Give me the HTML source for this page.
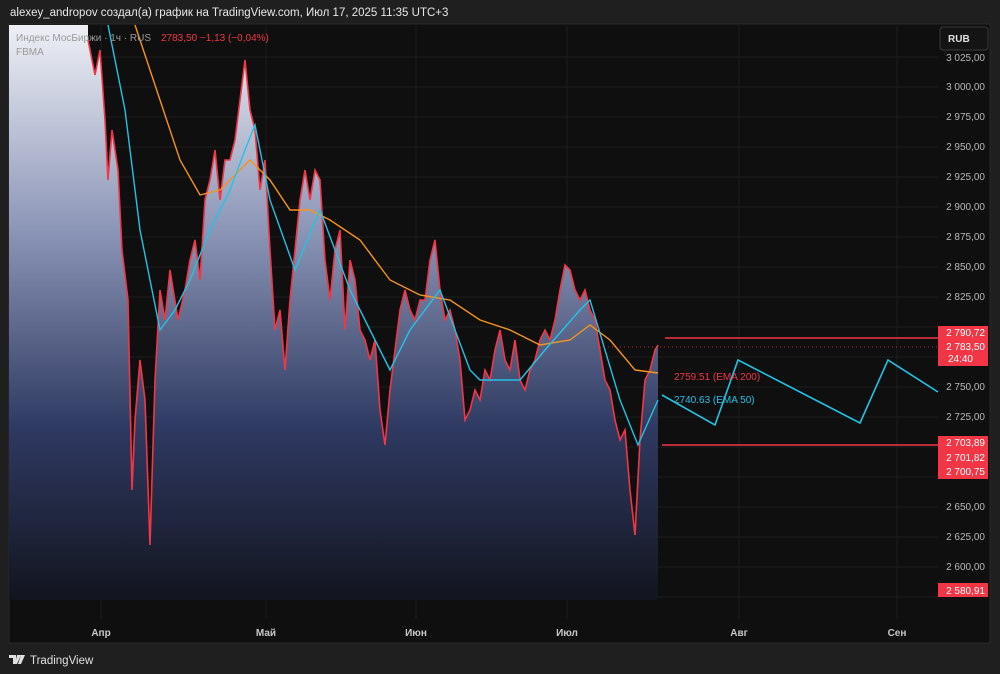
<!DOCTYPE html>
<html><head><meta charset="utf-8"><style>
body{margin:0;width:1000px;height:674px;background:#1f1f1f;overflow:hidden;font-family:"Liberation Sans","Noto Sans CJK SC",sans-serif}
svg{position:absolute;left:0;top:0}
</style></head><body>
<svg width="1000" height="674" xmlns="http://www.w3.org/2000/svg" font-family="Liberation Sans, sans-serif">
<defs>
<linearGradient id="g" x1="0" y1="0" x2="0" y2="1">
<stop offset="0" stop-color="#eef0f6"/><stop offset="0.35" stop-color="#8d97b8"/><stop offset="0.7" stop-color="#2f3a62"/><stop offset="1" stop-color="#12151f"/>
</linearGradient>
</defs>
<rect x="0" y="0" width="1000" height="674" fill="#1f1f1f"/>
<text x="10" y="16" fill="#e8e8e8" font-size="11.5">alexey_andropov создал(а) график на TradingView.com, Июл 17, 2025 11:35 UTC+3</text>
<rect x="9" y="24" width="981" height="619" fill="#0f0f0f" stroke="#2a2a2a"/>
<g stroke="#1c1c1c" stroke-width="1">
<line x1="9" x2="938" y1="57" y2="57"/><line x1="9" x2="938" y1="87" y2="87"/><line x1="9" x2="938" y1="117" y2="117"/><line x1="9" x2="938" y1="147" y2="147"/><line x1="9" x2="938" y1="177" y2="177"/><line x1="9" x2="938" y1="207" y2="207"/><line x1="9" x2="938" y1="237" y2="237"/><line x1="9" x2="938" y1="267" y2="267"/><line x1="9" x2="938" y1="297" y2="297"/><line x1="9" x2="938" y1="327" y2="327"/><line x1="9" x2="938" y1="357" y2="357"/><line x1="9" x2="938" y1="387" y2="387"/><line x1="9" x2="938" y1="417" y2="417"/><line x1="9" x2="938" y1="447" y2="447"/><line x1="9" x2="938" y1="477" y2="477"/><line x1="9" x2="938" y1="507" y2="507"/><line x1="9" x2="938" y1="537" y2="537"/><line x1="9" x2="938" y1="567" y2="567"/><line x1="9" x2="938" y1="597" y2="597"/>
<line x1="101" x2="101" y1="25" y2="618"/><line x1="266" x2="266" y1="25" y2="618"/><line x1="416" x2="416" y1="25" y2="618"/><line x1="567" x2="567" y1="25" y2="618"/><line x1="739" x2="739" y1="25" y2="618"/><line x1="897" x2="897" y1="25" y2="618"/>
</g>
<path fill="url(#g)" d="M9,25 L88,25 L88,40 L95,75 L100,50 L105,120 L108,180 L112,130 L118,170 L122,250 L128,300 L132,490 L135,420 L140,360 L145,400 L150,545 L155,380 L160,290 L165,320 L170,270 L178,320 L185,290 L190,260 L195,240 L200,280 L205,200 L210,180 L215,150 L220,200 L225,160 L230,160 L235,140 L240,100 L245,60 L250,110 L255,130 L260,190 L265,160 L270,250 L275,330 L280,310 L285,370 L290,300 L295,250 L300,200 L305,170 L310,200 L315,170 L320,180 L325,260 L330,300 L335,250 L340,230 L345,330 L350,260 L355,280 L360,330 L365,340 L370,360 L375,340 L380,410 L385,445 L390,390 L395,350 L400,310 L405,290 L410,310 L415,320 L420,300 L425,300 L430,260 L435,240 L440,290 L445,320 L450,310 L455,330 L460,360 L465,420 L470,410 L475,390 L480,400 L485,370 L490,380 L495,350 L500,330 L505,360 L510,370 L515,340 L520,380 L525,390 L530,370 L535,360 L540,340 L545,330 L550,340 L555,320 L560,290 L565,265 L570,270 L575,290 L580,300 L585,290 L590,310 L595,320 L600,350 L605,380 L610,390 L615,420 L620,440 L625,430 L630,490 L635,535 L640,440 L645,380 L650,370 L655,350 L658,345 L658,600 L9,600 Z"/>
<polyline fill="none" stroke="#f23645" stroke-width="1.6" points="88,40 95,75 100,50 105,120 108,180 112,130 118,170 122,250 128,300 132,490 135,420 140,360 145,400 150,545 155,380 160,290 165,320 170,270 178,320 185,290 190,260 195,240 200,280 205,200 210,180 215,150 220,200 225,160 230,160 235,140 240,100 245,60 250,110 255,130 260,190 265,160 270,250 275,330 280,310 285,370 290,300 295,250 300,200 305,170 310,200 315,170 320,180 325,260 330,300 335,250 340,230 345,330 350,260 355,280 360,330 365,340 370,360 375,340 380,410 385,445 390,390 395,350 400,310 405,290 410,310 415,320 420,300 425,300 430,260 435,240 440,290 445,320 450,310 455,330 460,360 465,420 470,410 475,390 480,400 485,370 490,380 495,350 500,330 505,360 510,370 515,340 520,380 525,390 530,370 535,360 540,340 545,330 550,340 555,320 560,290 565,265 570,270 575,290 580,300 585,290 590,310 595,320 600,350 605,380 610,390 615,420 620,440 625,430 630,490 635,535 640,440 645,380 650,370 655,350 658,345"/>
<polyline fill="none" stroke="#f7931a" stroke-width="1.4" points="135,25 160,100 180,160 200,195 220,190 250,160 270,180 290,210 310,210 330,220 360,240 390,280 420,295 450,300 480,320 510,330 540,345 570,340 590,325 610,340 635,370 658,373"/>
<polyline fill="none" stroke="#22c3e6" stroke-width="1.4" points="108,25 125,110 140,230 160,330 175,310 190,280 210,230 230,190 245,150 255,125 270,200 295,270 320,210 350,290 370,330 390,370 410,330 440,290 470,370 480,380 520,380 545,350 580,310 590,300 620,400 638,445 658,400"/>
<polyline fill="none" stroke="#22c3e6" stroke-width="1.6" points="662,395 715,425 738,360 860,423 888,360 938,392"/>
<line x1="665" x2="938" y1="338" y2="338" stroke="#f23645" stroke-width="1.5"/>
<line x1="662" x2="938" y1="445" y2="445" stroke="#f23645" stroke-width="1.5"/>
<line x1="600" x2="938" y1="347" y2="347" stroke="#f23645" stroke-width="0.8" stroke-dasharray="1,3"/>
<text x="674" y="380" fill="#f23645" font-size="10">2759.51 (EMA 200)</text>
<text x="674" y="403" fill="#22c3e6" font-size="10">2740.63 (EMA 50)</text>
<text x="16" y="41" fill="#9a9a9a" font-size="10">Индекс МосБиржи · 1ч · RUS</text>
<text x="161" y="41" fill="#f23645" font-size="10">2783,50  −1,13 (−0,04%)</text>
<text x="16" y="55" fill="#9a9a9a" font-size="10">FBMA</text>
<g fill="#b8b8b8" font-size="10" text-anchor="end">
<text x="985" y="61">3 025,00</text><text x="985" y="90">3 000,00</text><text x="985" y="120">2 975,00</text><text x="985" y="150">2 950,00</text><text x="985" y="180">2 925,00</text><text x="985" y="210">2 900,00</text><text x="985" y="240">2 875,00</text><text x="985" y="270">2 850,00</text><text x="985" y="300">2 825,00</text><text x="985" y="390">2 750,00</text><text x="985" y="420">2 725,00</text><text x="985" y="510">2 650,00</text><text x="985" y="540">2 625,00</text><text x="985" y="570">2 600,00</text>
</g>
<rect x="940" y="27" width="48" height="23" rx="3" fill="#141414" stroke="#3a3a3a"/>
<text x="948" y="42" fill="#e0e0e0" font-size="10" font-weight="bold">RUB</text>
<rect x="938" y="326" width="50" height="40" fill="#f23645"/>
<rect x="938" y="436" width="50" height="43" fill="#f23645"/>
<rect x="938" y="583" width="50" height="14" fill="#f23645"/>
<g fill="#fff" font-size="10" text-anchor="end">
<text x="985" y="336">2 790,72</text><text x="985" y="350">2 783,50</text><text x="973" y="362">24:40</text>
<text x="985" y="446">2 703,89</text><text x="985" y="461">2 701,82</text><text x="985" y="475">2 700,75</text>
<text x="985" y="594">2 580,91</text>
</g>
<g fill="#c8c8c8" font-size="10" font-weight="bold" text-anchor="middle">
<text x="101" y="636">Апр</text><text x="266" y="636">Май</text><text x="416" y="636">Июн</text><text x="567" y="636">Июл</text><text x="739" y="636">Авг</text><text x="897" y="636">Сен</text>
</g>
<path d="M9,655 h7 v9 h-3 v-6 h-4z M17,655 h2 l2,0 -4,9 h-2z M21,655 h4 l-4,9 h-3z" fill="#e0e0e0"/>
<text x="30" y="664" fill="#e0e0e0" font-size="11.5">TradingView</text>
</svg>
</body></html>
